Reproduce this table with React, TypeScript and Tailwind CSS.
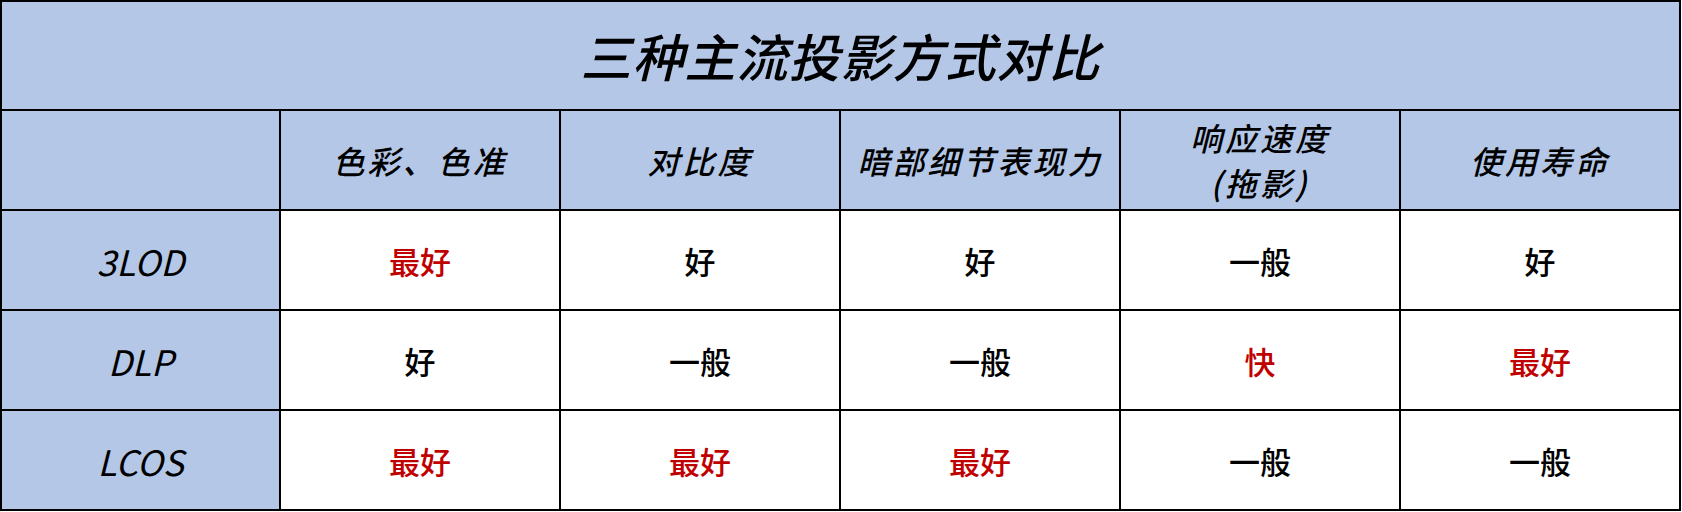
import React from "react";

const FONT = '"Noto Sans CJK SC", "Noto Sans", sans-serif';

type Cell = { t: string; red?: boolean };

const headers: string[][] = [
  ["色彩、色准"],
  ["对比度"],
  ["暗部细节表现力"],
  ["响应速度", "(拖影)"],
  ["使用寿命"],
];

const rows: { label: string; cells: Cell[] }[] = [
  {
    label: "3LOD",
    cells: [{ t: "最好", red: true }, { t: "好" }, { t: "好" }, { t: "一般" }, { t: "好" }],
  },
  {
    label: "DLP",
    cells: [{ t: "好" }, { t: "一般" }, { t: "一般" }, { t: "快", red: true }, { t: "最好", red: true }],
  },
  {
    label: "LCOS",
    cells: [
      { t: "最好", red: true },
      { t: "最好", red: true },
      { t: "最好", red: true },
      { t: "一般" },
      { t: "一般" },
    ],
  },
];

export default function App() {
  return (
    <div className="w-[1682px] h-[512px] bg-white" style={{ fontFamily: FONT }}>
      <div className="w-[1681px] h-[511px] border-2 border-black bg-black grid grid-cols-[277px_repeat(5,278px)] grid-rows-[107px_repeat(4,98px)] gap-[2px]">
        <div className="col-span-6 bg-[#B4C7E7] flex items-center justify-center text-black italic font-medium text-[51px] tracking-[1px] leading-none">
          三种主流投影方式对比
        </div>
        <div className="bg-[#B4C7E7]" />
        {headers.map((h, i) => (
          <div
            key={i}
            className="bg-[#B4C7E7] flex flex-col items-center justify-center text-black italic font-medium text-[32px] tracking-[3px] leading-[45px]"
          >
            {h.map((line, j) => (
              <span key={j}>{line}</span>
            ))}
          </div>
        ))}
        {rows.map((r) => (
          <React.Fragment key={r.label}>
            <div className="bg-[#B4C7E7] flex items-center justify-center text-black italic font-normal text-[35px] leading-none">
              {r.label}
            </div>
            {r.cells.map((c, i) => (
              <div
                key={i}
                className={
                  "bg-white flex items-center justify-center font-medium text-[31px] leading-none " +
                  (c.red ? "text-[#C00000]" : "text-black")
                }
              >
                {c.t}
              </div>
            ))}
          </React.Fragment>
        ))}
      </div>
    </div>
  );
}
